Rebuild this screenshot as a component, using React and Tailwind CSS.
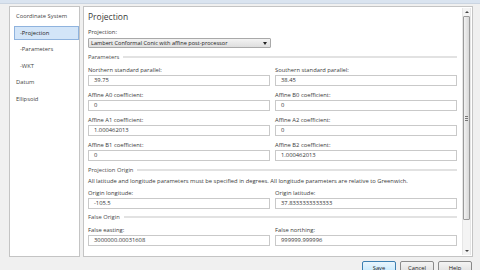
import React from 'react';

// Left navigation entries
const navItems = [
  { label: 'Coordinate System', indent: false },
  { label: '-Projection', indent: true, selected: true },
  { label: '-Parameters', indent: true },
  { label: '-WKT', indent: true },
  { label: 'Datum', indent: false },
  { label: 'Ellipsoid', indent: false },
];

const SectionHeader = ({ title, className = '' }) => (
  <div className={`flex items-center gap-[4px] h-[10px] ${className}`}>
    <span className="leading-[10px] text-[#4a4a4a]">{title}</span>
    <div className="flex-1 h-[2px] bg-[#e2e2e2]" />
  </div>
);

const Field = ({ label, value }) => (
  <div className="flex flex-col">
    <p className="h-[10px] leading-[10px] text-[#3a3a3a]">{label}</p>
    <div className="h-[11px] border border-[#c9c9c9] bg-white pl-[5px] leading-[9px] text-[#333]">
      {value}
    </div>
  </div>
);

const FieldRow = ({ left, right, className = '' }) => (
  <div className={`grid grid-cols-2 gap-x-[5px] ${className}`}>
    <Field label={left[0]} value={left[1]} />
    <Field label={right[0]} value={right[1]} />
  </div>
);

const Button = ({ children, primary }) => (
  <button
    type="button"
    className={`w-[34px] h-[14px] rounded-[2px] border leading-[12px] text-[#222] ${
      primary
        ? 'border-[#3c7fb1] bg-linear-to-b from-[#eaf6fd] to-[#bee6fd]'
        : 'border-[#8a8a8a] bg-linear-to-b from-[#f4f4f4] to-[#dddddd]'
    }`}
  >
    {children}
  </button>
);

export default function App() {
  return (
    <div className="w-[480px] h-[270px] overflow-hidden bg-[#f0f0f0] flex flex-col font-['Open_Sans','Noto_Sans',sans-serif] text-[5.8px]">
      {/* window frame strip */}
      <div className="h-[4px] shrink-0 bg-[#dae4f0] border-b border-[#cbd5e1]" />

      <div className="flex shrink-0 gap-[3px] pl-[9px] pr-[7px] pt-[2px] h-[253px]">
        {/* Nav */}
        <div className="w-[71px] border border-[#c4c4c4] bg-white pt-[1px] flex flex-col">
          {navItems.map(item => (
            <div key={item.label} className="h-[16.6px] flex items-center">
              {item.selected ? (
                <div className="ml-[4px] flex-1 h-[14px] flex items-center bg-[#d3e5f8] border border-[#8fb3de] pl-[5px] text-[#222]">
                  {item.label}
                </div>
              ) : (
                <span className={`${item.indent ? 'pl-[10px]' : 'pl-[6px]'} text-[#444]`}>
                  {item.label}
                </span>
              )}
            </div>
          ))}
        </div>

        {/* Form panel */}
        <div className="flex-1 border border-[#c4c4c4] bg-white flex pl-[4px] pr-[1px]">
          <div className="flex-1 flex flex-col pr-[5px]">
            <h2 className="mt-[4px] h-[12px] leading-[12px] text-[8.5px] text-[#3a3a3a]">Projection</h2>
            <p className="mt-[4px] h-[10px] leading-[10px] text-[#3a3a3a]">Projection:</p>
            <div className="w-[183px] h-[10px] mt-[1px] flex items-center justify-between border border-[#a9a9a9] rounded-[1px] bg-linear-to-b from-[#f3f3f3] to-[#dedede] pl-[2px] pr-[3px] text-[#222]">
              <span className="leading-[8px] text-[5.6px]">Lambert Conformal Conic with affine post-processor</span>
              <span className="w-0 h-0 border-l-[2px] border-r-[2px] border-t-[3px] border-l-transparent border-r-transparent border-t-[#222]" />
            </div>

            <SectionHeader title="Parameters" className="mt-[4px]" />
            <FieldRow className="mt-[3px]" left={['Northern standard parallel:', '39.75']} right={['Southern standard parallel:', '38.45']} />
            <FieldRow className="mt-[4px]" left={['Affine A0 coefficient:', '0']} right={['Affine B0 coefficient:', '0']} />
            <FieldRow className="mt-[4px]" left={['Affine A1 coefficient:', '1.000462013']} right={['Affine A2 coefficient:', '0']} />
            <FieldRow className="mt-[4px]" left={['Affine B1 coefficient:', '0']} right={['Affine B2 coefficient:', '1.000462013']} />

            <SectionHeader title="Projection Origin" className="mt-[4px]" />
            <p className="mt-[1px] h-[10px] leading-[10px] text-[#3a3a3a]">
              All latitude and longitude parameters must be specified in degrees. All longitude parameters are relative to Greenwich.
            </p>
            <FieldRow className="mt-[2px]" left={['Origin longitude:', '-105.5']} right={['Origin latitude:', '37.8333333333333']} />

            <SectionHeader title="False Origin" className="mt-[3px]" />
            <FieldRow className="mt-[3px]" left={['False easting:', '3000000.00031608']} right={['False northing:', '999999.999996']} />
          </div>

          {/* Scrollbar */}
          <div className="w-[9px] my-[1px] flex flex-col border-x border-[#e6e6e6] bg-[#f4f4f4]">
            <div className="h-[8px] flex items-center justify-center">
              <span className="w-0 h-0 border-l-[2px] border-r-[2px] border-b-[2px] border-l-transparent border-r-transparent border-b-[#444]" />
            </div>
            <div className="h-[204px] rounded-[1px] border border-[#9a9a9a] bg-linear-to-r from-[#f2f2f2] to-[#d8d8d8] flex flex-col items-center justify-center gap-[1px]">
              <div className="w-[3px] h-px bg-[#777]" />
              <div className="w-[3px] h-px bg-[#777]" />
              <div className="w-[3px] h-px bg-[#777]" />
            </div>
            <div className="flex-1" />
            <div className="h-[8px] flex items-center justify-center">
              <span className="w-0 h-0 border-l-[2px] border-r-[2px] border-t-[2px] border-l-transparent border-r-transparent border-t-[#444]" />
            </div>
          </div>
        </div>
      </div>

      {/* Buttons */}
      <div className="flex shrink-0 justify-end gap-[4px] pr-[8px] pt-[4px]">
        <Button primary>Save</Button>
        <Button>Cancel</Button>
        <Button>Help</Button>
      </div>
    </div>
  );
}
